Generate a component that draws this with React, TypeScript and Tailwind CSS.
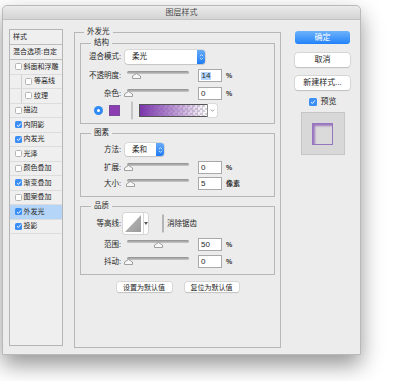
import React from 'react';

// ─── Small controls ──────────────────────────────────────────────────────────

function Check({ on, big }: { on?: boolean; big?: boolean }) {
  const size = big ? 'h-[8px] w-[8px]' : 'h-[7px] w-[7px]';
  if (on) {
    return (
      <span className={`flex shrink-0 items-center justify-center rounded-[1.5px] bg-[#3a8ef6] ${size}`}>
        <svg viewBox="0 0 8 8" className="h-[6px] w-[6px]">
          <path d="M1.4 4.3 3.2 6 6.6 1.9" fill="none" stroke="#fff" strokeWidth={1.3} />
        </svg>
      </span>
    );
  }
  return <span className={`shrink-0 rounded-[1.5px] border border-[#b5b5b5] bg-white ${size}`} />;
}

function Radio({ on }: { on?: boolean }) {
  return on ? (
    <span className="flex h-[9px] w-[9px] shrink-0 items-center justify-center rounded-full bg-[#2f8af5]">
      <span className="h-[3px] w-[3px] rounded-full bg-white" />
    </span>
  ) : (
    <span className="h-[9px] w-[9px] shrink-0 rounded-full border border-[#c4c4c4] bg-white" />
  );
}

function Select({ value, className }: { value: string; className: string }) {
  return (
    <div
      className={`flex items-center rounded-[3px] bg-white shadow-[0_0_0_0.5px_#c2c2c2,0_1px_1px_rgba(0,0,0,0.15)] ${className}`}
    >
      <span className="flex-1 pl-[7px] text-[7.5px] leading-none">{value}</span>
      <span className="flex h-full w-[8px] items-center justify-center rounded-r-[3px] bg-gradient-to-b from-[#65abfb] to-[#1b7bf3]">
        <svg viewBox="0 0 6 10" className="h-[8px] w-[5px]">
          <path d="M1 4 3 2 5 4M1 6 3 8 5 6" fill="none" stroke="#fff" strokeWidth={0.9} />
        </svg>
      </span>
    </div>
  );
}

function Slider({ pos }: { pos: number }) {
  return (
    <div className="relative ml-[6px] h-[13px] w-[62px] shrink-0">
      <div className="absolute left-0 right-0 top-[2px] h-[2.5px] rounded-full bg-gradient-to-b from-[#8e8e8e] to-[#c9c9c9]" />
      <svg
        className="absolute top-[4px]"
        style={{ left: pos - 4 }}
        width={9}
        height={6}
        viewBox="0 0 9 6"
      >
        <path d="M4.5 0.5 8.5 3 8.5 5.5 0.5 5.5 0.5 3Z" fill="#f7f7f7" stroke="#8c8c8c" strokeWidth={0.8} />
      </svg>
    </div>
  );
}

function Field({ value, sel }: { value: string; sel?: boolean }) {
  return (
    <div className="ml-[9px] flex h-[13px] w-[24px] shrink-0 items-center border border-[#a9a9a9] bg-white pl-[2px] text-[8px] leading-none">
      <span className={sel ? 'bg-[#b3d4fd] px-[0.5px]' : ''}>{value}</span>
    </div>
  );
}

function Label({ children }: { children: React.ReactNode }) {
  return <span className="w-[40px] shrink-0 text-right text-[7.5px] leading-none">{children}</span>;
}

function SliderRow({
  label,
  pos,
  value,
  unit,
  sel,
  className,
}: {
  label: string;
  pos: number;
  value: string;
  unit: string;
  sel?: boolean;
  className: string;
}) {
  return (
    <div className={`flex h-[13px] items-center ${className}`}>
      <Label>{label}</Label>
      <Slider pos={pos} />
      <Field value={value} sel={sel} />
      <span className="ml-[4px] text-[7px] font-bold leading-none text-[#333]">{unit}</span>
    </div>
  );
}

function Group({ title, children, className }: { title: string; children: React.ReactNode; className: string }) {
  return (
    <fieldset className={`border border-[#b7b7b7] ${className}`}>
      <legend className="ml-[10px] px-[3px] text-[7.5px] leading-[10px]">{title}</legend>
      {children}
    </fieldset>
  );
}

// ─── Left list ───────────────────────────────────────────────────────────────

const items = [
  { t: '斜面和浮雕' },
  { t: '等高线', sub: true },
  { t: '纹理', sub: true },
  { t: '描边' },
  { t: '内阴影', on: true },
  { t: '内发光', on: true },
  { t: '光泽' },
  { t: '颜色叠加' },
  { t: '渐变叠加', on: true },
  { t: '图案叠加' },
  { t: '外发光', on: true, sel: true },
  { t: '投影', on: true },
];

function StyleList() {
  return (
    <div className="mt-[9px] h-[317px] w-[54px] shrink-0 border border-[#b5b5b5] bg-[#efefef] text-[7px]">
      <div className="flex h-[15px] items-center border-b border-[#bdbdbd] pl-[3px]">样式</div>
      <div className="flex h-[15px] items-center border-b border-[#bdbdbd] pl-[3px]">混合选项:自定</div>
      {items.map((it) =>
        it.sub ? (
          <div key={it.t} className="h-[14.5px] border-b border-[#dcdcdc] pl-[11px]">
            <div className="flex h-full items-center gap-[2px] border-l border-[#cfcfcf] pl-[3px]">
              <Check on={it.on} />
              <span>{it.t}</span>
            </div>
          </div>
        ) : (
          <div
            key={it.t}
            className={`flex h-[14.5px] items-center gap-[1.5px] border-b border-[#dcdcdc] pl-[5px] ${
              it.sel ? 'bg-[#b4d4f8]' : ''
            }`}
          >
            <Check on={it.on} />
            <span>{it.t}</span>
          </div>
        ),
      )}
    </div>
  );
}

// ─── Middle panel ────────────────────────────────────────────────────────────

function OuterGlow() {
  return (
    <fieldset className="ml-[11px] mt-[7px] h-[321px] w-[207px] shrink-0 border border-[#b7b7b7] px-[5px]">
      <legend className="ml-[4px] px-[3px] text-[7.5px] leading-[10px]">外发光</legend>

      <Group title="结构" className="mt-[1px] pb-[6px]">
        <div className="mt-[2px] flex h-[14px] items-center">
          <Label>混合模式:</Label>
          <Select value="柔光" className="ml-[4px] h-[14px] w-[80px]" />
        </div>
        <SliderRow label="不透明度:" pos={9} value="14" unit="%" sel className="mt-[5px]" />
        <SliderRow label="杂色:" pos={1} value="0" unit="%" className="mt-[5px]" />
        <div className="mt-[4px] flex h-[13px] items-center">
          <span className="ml-[13px]">
            <Radio on />
          </span>
          <span className="ml-[6px] h-[11px] w-[11px] border border-[#7a4a9a] bg-[#8b3db1]" />
          <span className="ml-[11px]">
            <Radio />
          </span>
          <div className="ml-[6px] h-[13px] w-[69px] border border-[#555] bg-[repeating-conic-gradient(#d4d4d4_0_25%,#ffffff_0_50%)] bg-[length:5px_5px]">
            <div className="h-full w-full bg-gradient-to-r from-[#7a35ab] via-[#9b66c0]/70 to-transparent" />
          </div>
          <div className="flex h-[13px] w-[9px] items-center justify-center rounded-r-[2px] bg-white shadow-[0_0_0_0.5px_#c8c8c8]">
            <svg viewBox="0 0 6 4" className="h-[3px] w-[5px]">
              <path d="M0.8 0.8 3 3 5.2 0.8" fill="none" stroke="#555" strokeWidth={0.8} />
            </svg>
          </div>
        </div>
      </Group>

      <Group title="图素" className="mt-[4px] pb-[6px]">
        <div className="mt-[5px] flex h-[13px] items-center">
          <Label>方法:</Label>
          <Select value="柔和" className="ml-[4px] h-[13px] w-[39px]" />
        </div>
        <SliderRow label="扩展:" pos={1} value="0" unit="%" className="mt-[5px]" />
        <SliderRow label="大小:" pos={3} value="5" unit="像素" className="mt-[3px]" />
      </Group>

      <Group title="品质" className="mt-[4px] pb-[6px]">
        <div className="mt-[2px] flex h-[21px] items-center">
          <Label>等高线:</Label>
          <div className="ml-[2px] flex h-[21px] w-[25px] rounded-[2px] bg-white shadow-[0_0_0_0.5px_#bdbdbd]">
            <svg viewBox="0 0 20 21" className="h-[21px] w-[20px]">
              <defs>
                <linearGradient id="cg" x1="0" y1="0" x2="1" y2="1">
                  <stop offset="0" stopColor="#bdbdbd" />
                  <stop offset="1" stopColor="#9a9a9a" />
                </linearGradient>
              </defs>
              <polygon points="2,19 18,2 18,19" fill="url(#cg)" />
            </svg>
            <div className="flex flex-1 items-center justify-center border-l border-[#d6d6d6]">
              <svg viewBox="0 0 4 3" className="h-[3px] w-[4px]">
                <path d="M0 0H4L2 3Z" fill="#555" />
              </svg>
            </div>
          </div>
          <span className="ml-[14px]">
            <Check />
          </span>
          <span className="ml-[3px] text-[7.5px] leading-none">消除锯齿</span>
        </div>
        <SliderRow label="范围:" pos={31} value="50" unit="%" className="mt-[4px]" />
        <SliderRow label="抖动:" pos={1} value="0" unit="%" className="mt-[4px]" />
      </Group>

      <div className="mt-[7px] flex justify-center gap-[13px]">
        <button className="h-[10px] w-[55px] rounded-[2px] bg-white text-[7px] leading-none shadow-[0_0_0_0.5px_#cacaca,0_0.5px_1px_rgba(0,0,0,0.2)]">
          设置为默认值
        </button>
        <button className="h-[10px] w-[54px] rounded-[2px] bg-white text-[7px] leading-none shadow-[0_0_0_0.5px_#cacaca,0_0.5px_1px_rgba(0,0,0,0.2)]">
          复位为默认值
        </button>
      </div>
    </fieldset>
  );
}

// ─── Right column ────────────────────────────────────────────────────────────

function Actions() {
  const plain =
    'h-[14px] w-[55px] rounded-[3px] bg-white text-[8px] leading-none shadow-[0_0_0_0.5px_#c6c6c6,0_0.5px_1px_rgba(0,0,0,0.2)]';
  return (
    <div className="ml-[14px] mt-[11px] flex w-[55px] shrink-0 flex-col items-center">
      <button className="h-[13px] w-[55px] rounded-[3px] bg-gradient-to-b from-[#6bb2fb] to-[#1f82f9] text-[8px] leading-none text-white">
        确定
      </button>
      <button className={`mt-[9px] ${plain}`}>取消</button>
      <button className={`mt-[9px] ${plain}`}>新建样式...</button>
      <div className="mt-[8px] flex items-center gap-[4px]">
        <Check on big />
        <span className="text-[8px] leading-none">预览</span>
      </div>
      <div className="mt-[6px] flex h-[43px] w-[44px] items-center justify-center border border-[#c6c6c6] bg-[#d8d8d8]">
        <div className="h-[22px] w-[21px] border-[1.5px] border-[#9575c0] bg-[#dadada] shadow-[inset_2px_2px_2px_rgba(125,70,175,0.65)]" />
      </div>
    </div>
  );
}

// ─── Page ────────────────────────────────────────────────────────────────────

export default function App() {
  return (
    <div className="h-[381px] w-[414px] overflow-hidden bg-white pl-[2px] pt-[5px] font-['Liberation_Sans','Noto_Sans_CJK_SC',sans-serif] text-[#262626]">
      <div className="flex h-[350px] w-[359px] flex-col rounded-t-[5px] border border-[#b9b9b9] bg-[#ececec] shadow-[0_10px_22px_rgba(0,0,0,0.42)]">
        <div className="flex h-[14px] shrink-0 items-center justify-center rounded-t-[5px] border-b border-[#c2c2c2] bg-gradient-to-b from-[#ebebeb] to-[#d4d4d4] text-[8px] leading-none text-[#4a4a4a]">
          图层样式
        </div>
        <div className="flex items-start pl-[6px]">
          <StyleList />
          <OuterGlow />
          <Actions />
        </div>
      </div>
    </div>
  );
}
